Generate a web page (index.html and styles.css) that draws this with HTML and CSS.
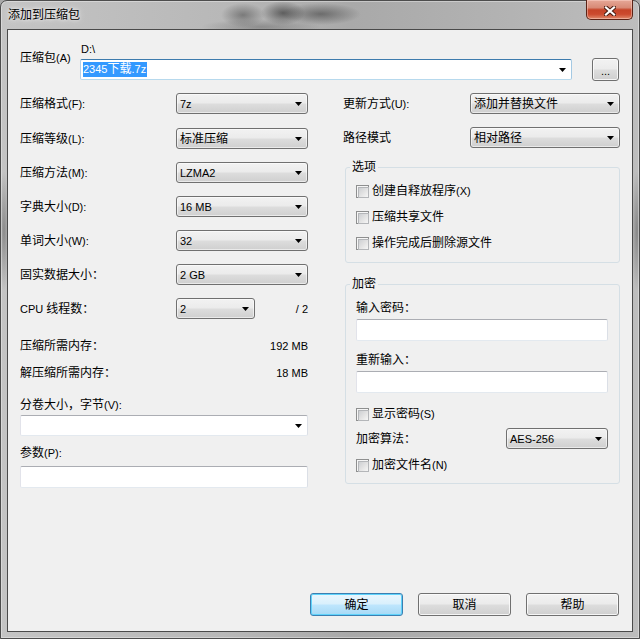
FILE: index.html
```html
<!DOCTYPE html>
<html lang="zh-CN">
<head>
<meta charset="utf-8">
<title>添加到压缩包</title>
<link rel="stylesheet" href="styles.css">
</head>
<body>
<div class="window">
  <div class="titlebar">
    <span class="title">添加到压缩包</span>
    <div class="close">
      <svg width="12" height="10" viewBox="0 0 12 10"><path d="M2 1.5 L10 8.5 M10 1.5 L2 8.5" stroke="#4a1d12" stroke-width="4.2" stroke-linecap="square" fill="none"/><path d="M2 1.5 L10 8.5 M10 1.5 L2 8.5" stroke="#ffffff" stroke-width="2.2" stroke-linecap="square" fill="none"/></svg>
    </div>
  </div>
  <div class="client">
    <div class="archive">
      <div class="arch-label">压缩包<span class="en">(A)</span></div>
      <div class="arch-main">
        <div class="path en">D:\</div>
        <div class="edit-combo focused">
          <span class="sel"><span class="en">2345</span>下载<span class="en">.7z</span></span>
          <svg class="arrow" width="7" height="4" viewBox="0 0 7 4"><polygon points="0,0 7,0 3.5,4" fill="#000"/></svg>
        </div>
      </div>
      <button class="btn browse"><span class="en">...</span></button>
    </div>

    <div class="main">
      <div class="col left">
        <div class="row first">
          <span class="lbl">压缩格式<span class="en">(F):</span></span>
          <div class="combo"><span class="en">7z</span><svg class="arrow" width="7" height="4" viewBox="0 0 7 4"><polygon points="0,0 7,0 3.5,4" fill="#000"/></svg></div>
        </div>
        <div class="row">
          <span class="lbl">压缩等级<span class="en">(L):</span></span>
          <div class="combo"><span>标准压缩</span><svg class="arrow" width="7" height="4" viewBox="0 0 7 4"><polygon points="0,0 7,0 3.5,4" fill="#000"/></svg></div>
        </div>
        <div class="row">
          <span class="lbl">压缩方法<span class="en">(M):</span></span>
          <div class="combo"><span class="en">LZMA2</span><svg class="arrow" width="7" height="4" viewBox="0 0 7 4"><polygon points="0,0 7,0 3.5,4" fill="#000"/></svg></div>
        </div>
        <div class="row">
          <span class="lbl">字典大小<span class="en">(D):</span></span>
          <div class="combo"><span class="en">16 MB</span><svg class="arrow" width="7" height="4" viewBox="0 0 7 4"><polygon points="0,0 7,0 3.5,4" fill="#000"/></svg></div>
        </div>
        <div class="row">
          <span class="lbl">单词大小<span class="en">(W):</span></span>
          <div class="combo"><span class="en">32</span><svg class="arrow" width="7" height="4" viewBox="0 0 7 4"><polygon points="0,0 7,0 3.5,4" fill="#000"/></svg></div>
        </div>
        <div class="row">
          <span class="lbl">固实数据大小：</span>
          <div class="combo"><span class="en">2 GB</span><svg class="arrow" width="7" height="4" viewBox="0 0 7 4"><polygon points="0,0 7,0 3.5,4" fill="#000"/></svg></div>
        </div>
        <div class="row">
          <span class="lbl"><span class="en">CPU </span>线程数：</span>
          <div class="combo small"><span class="en">2</span><svg class="arrow" width="7" height="4" viewBox="0 0 7 4"><polygon points="0,0 7,0 3.5,4" fill="#000"/></svg></div>
          <span class="ratio en">/ 2</span>
        </div>

        <div class="mem first-mem"><span>压缩所需内存：</span><span class="en">192 MB</span></div>
        <div class="mem"><span>解压缩所需内存：</span><span class="en">18 MB</span></div>

        <div class="vol-label">分卷大小，字节<span class="en">(V):</span></div>
        <div class="edit-combo plain">
          <span></span>
          <svg class="arrow" width="7" height="4" viewBox="0 0 7 4"><polygon points="0,0 7,0 3.5,4" fill="#000"/></svg>
        </div>
        <div class="param-label">参数<span class="en">(P):</span></div>
        <div class="textbox param"></div>
      </div>

      <div class="col right">
        <div class="row">
          <span class="lbl rl">更新方式<span class="en">(U):</span></span>
          <div class="combo wide"><span>添加并替换文件</span><svg class="arrow" width="7" height="4" viewBox="0 0 7 4"><polygon points="0,0 7,0 3.5,4" fill="#000"/></svg></div>
        </div>
        <div class="row">
          <span class="lbl rl">路径模式</span>
          <div class="combo wide"><span>相对路径</span><svg class="arrow" width="7" height="4" viewBox="0 0 7 4"><polygon points="0,0 7,0 3.5,4" fill="#000"/></svg></div>
        </div>

        <fieldset class="group options">
          <legend>选项</legend>
          <div class="cbrow"><span class="cb"></span>创建自释放程序<span class="en">(X)</span></div>
          <div class="cbrow gap10"><span class="cb"></span>压缩共享文件</div>
          <div class="cbrow gap10"><span class="cb"></span>操作完成后删除源文件</div>
        </fieldset>

        <fieldset class="group crypt">
          <legend>加密</legend>
          <div class="flabel">输入密码：</div>
          <div class="textbox pw"></div>
          <div class="flabel second">重新输入：</div>
          <div class="textbox pw"></div>
          <div class="cbrow show"><span class="cb"></span>显示密码<span class="en">(S)</span></div>
          <div class="algo">
            <span>加密算法：</span>
            <div class="combo algo-combo"><span class="en">AES-256</span><svg class="arrow" width="7" height="4" viewBox="0 0 7 4"><polygon points="0,0 7,0 3.5,4" fill="#000"/></svg></div>
          </div>
          <div class="cbrow names"><span class="cb"></span>加密文件名<span class="en">(N)</span></div>
        </fieldset>
      </div>
    </div>

    <div class="footer">
      <button class="btn default">确定</button>
      <button class="btn">取消</button>
      <button class="btn">帮助</button>
    </div>
  </div>
</div>
</body>
</html>
```
FILE: styles.css
```css
* { box-sizing: border-box; }
html, body { margin: 0; padding: 0; }
body {
  width: 640px;
  height: 639px;
  overflow: hidden;
  background: #a9a9a9;
  font-family: "Liberation Sans", "Noto Sans CJK SC", sans-serif;
  font-size: 12px;
  color: #000;
}
.en { font-size: 11px; }

.window {
  width: 640px;
  height: 639px;
  display: flex;
  flex-direction: column;
  border: 1px solid #4d4d4d;
  border-radius: 7px 7px 0 0;
  padding: 0 6px 6px 6px;
  background:
    radial-gradient(ellipse 22px 12px at 282px 12px, rgba(40,40,40,0.6), rgba(40,40,40,0) 100%),
    radial-gradient(ellipse 22px 12px at 242px 14px, rgba(50,50,50,0.45), rgba(50,50,50,0) 100%),
    radial-gradient(ellipse 40px 11px at 320px 13px, rgba(55,55,55,0.55), rgba(55,55,55,0) 100%),
    radial-gradient(ellipse 60px 8px at 260px 26px, rgba(70,70,70,0.35), rgba(70,70,70,0) 100%),
    radial-gradient(ellipse 6px 60px at 3px 230px, rgba(70,70,70,0.45), rgba(70,70,70,0) 100%),
    radial-gradient(ellipse 6px 60px at 636px 230px, rgba(70,70,70,0.45), rgba(70,70,70,0) 100%),
    linear-gradient(90deg, #c4c4c4 0%, #b8b8b8 35%, #a9a9a9 55%, #b3b3b3 80%, #bdbdbd 100%);
  box-shadow: inset 0 0 0 1px rgba(255,255,255,0.35);
}

.titlebar {
  height: 28px;
  display: flex;
  justify-content: space-between;
  align-items: flex-start;
}
.title {
  margin: 6px 0 0 1px;
  line-height: 16px;
  text-shadow: 0 0 6px rgba(255,255,255,0.9), 0 0 3px rgba(255,255,255,0.7);
}
.close {
  width: 47px;
  height: 20px;
  margin-top: -1px;
  border: 1px solid #5b2316;
  border-top: none;
  border-radius: 0 0 5px 5px;
  background: linear-gradient(#e6a898 0%, #d88a76 40%, #c64428 52%, #cc4a2e 75%, #e08a6c 100%);
  box-shadow: inset 0 0 0 1px rgba(255,220,210,0.45);
  display: flex;
  align-items: center;
  justify-content: center;
  padding-top: 2px;
}

.client {
  flex: 1;
  border: 1px solid #4a4a4a;
  background: #f0f0f0;
  padding: 12px 12px 15px 12px;
  display: flex;
  flex-direction: column;
}

/* archive row */
.archive {
  display: flex;
  align-items: flex-start;
  height: 39px;
}
.arch-label {
  width: 60px;
  margin-top: 8px;
  line-height: 16px;
}
.arch-main { width: 492px; }
.path {
  height: 15px;
  line-height: 15px;
  margin-bottom: 2px;
  padding-left: 1px;
}
.edit-combo {
  height: 21px;
  background: #fff;
  border: 1px solid;
  border-color: #abadb3 #dbdfe6 #e3e9ef #e2e3ea;
  border-radius: 2px;
  display: flex;
  align-items: center;
  padding-left: 1px;
}
.edit-combo.focused {
  border-color: #3d7bad #a4c9e3 #b7d9ed #b5cfe7;
}
.sel {
  display: inline-block;
  margin-left: 1px;
  line-height: 15px;
  height: 15px;
  background: #3399ff;
  color: #fff;
  padding: 0 1px 0 0;
}
.arrow {
  margin-left: auto;
  margin-right: 5px;
  flex: none;
}

.btn {
  height: 23px;
  width: 93px;
  border: 1px solid #707070;
  border-radius: 3px;
  background: linear-gradient(#f2f2f2 0%, #ebebeb 48%, #dddddd 52%, #cfcfcf 100%);
  box-shadow: inset 0 0 0 1px rgba(252,252,252,0.85);
  font: inherit;
  color: #000;
  padding: 0;
  line-height: 16px;
}
.btn.default {
  border-color: #3c7fb1;
  background: linear-gradient(#eaf6fd 0%, #d9f0fc 48%, #bee6fd 52%, #a7d9f5 100%);
  box-shadow: inset 0 0 0 1px #5fd3fb;
}
.browse {
  width: 27px;
  margin-left: 20px;
  margin-top: 16px;
  padding-top: 3px;
}

/* main columns */
.main {
  display: flex;
  gap: 35px;
  margin-top: 12px;
}
.col { display: flex; flex-direction: column; }
.left { width: 288px; }
.right { width: 277px; }

.row {
  display: flex;
  align-items: center;
  height: 21px;
}
.row + .row { margin-top: 13px; }
.row.first { margin-bottom: 1px; }
.lbl { width: 156px; line-height: 16px; }
.lbl.rl { width: 127px; }

.combo {
  height: 21px;
  width: 132px;
  border: 1px solid #707070;
  border-radius: 3px;
  background: linear-gradient(#f2f2f2 0%, #ebebeb 48%, #dddddd 52%, #cfcfcf 100%);
  box-shadow: inset 0 0 0 1px rgba(255,255,255,0.55);
  padding-left: 3px;
  display: flex;
  align-items: center;
  line-height: 16px;
}
.combo.small { width: 79px; }
.combo.wide { width: 150px; }
.ratio { margin-left: auto; }

.mem {
  display: flex;
  justify-content: space-between;
  line-height: 16px;
  height: 16px;
}
.first-mem { margin-top: 19px; }
.mem + .mem { margin-top: 11px; }

.vol-label { margin-top: 16px; line-height: 16px; }
.left .edit-combo.plain { margin-top: 2px; }
.param-label { margin-top: 9px; line-height: 16px; }

.textbox {
  height: 22px;
  background: #fff;
  border: 1px solid;
  border-color: #abadb3 #dbdfe6 #e3e9ef #e2e3ea;
  border-radius: 2px;
}
.param { margin-top: 5px; }

/* group boxes */
.group {
  margin: 11px 0 0 2px;
  width: 275px;
  border: 1px solid #d5dfe5;
  border-radius: 3px;
  padding: 8px 11px 11px 6px;
  min-width: 0;
}
.group legend {
  padding: 0 2px;
  margin-left: -2px;
  line-height: 16px;
}
.group.crypt { margin-top: 13px; padding-bottom: 10px; }

.cbrow {
  display: flex;
  align-items: center;
  height: 16px;
  line-height: 16px;
  margin-left: 4px;
}
.gap10 { margin-top: 10px; }
.cb {
  width: 13px;
  height: 13px;
  flex: none;
  border: 1px solid #8e8f8f;
  background: #f6f6f6;
  padding: 1px;
  margin-right: 3px;
}
.cb::after {
  content: "";
  display: block;
  width: 9px;
  height: 9px;
  border: 1px solid #b4b6b9;
  background: linear-gradient(135deg, #cdcfd2 0%, #e4e4e4 55%, #f6f6f6 100%);
}

.flabel { margin-left: 4px; line-height: 16px; height: 16px; }
.flabel.second { margin-top: 11px; }
.pw { margin: 3px 0 0 4px; }
.cbrow.show { margin-top: 13px; }
.algo {
  display: flex;
  align-items: center;
  height: 21px;
  margin: 6px 0 0 4px;
  line-height: 16px;
}
.algo-combo { width: 102px; margin-left: auto; }
.cbrow.names { margin-top: 8px; }

.footer {
  margin-top: auto;
  display: flex;
  justify-content: flex-end;
  gap: 15px;
  padding-right: 1px;
}
```
